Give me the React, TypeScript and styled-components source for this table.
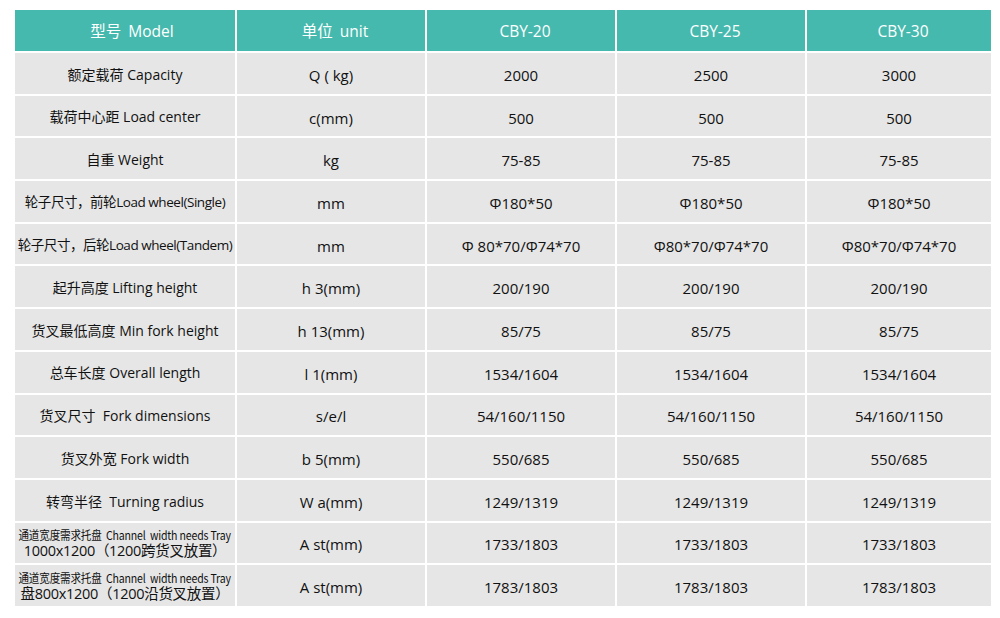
import React from "react";
import styled, { createGlobalStyle } from "styled-components";

const GlobalStyle = createGlobalStyle`
  body {
    margin: 0;
    background: #fff;
    font-family: "Open Sans", "Noto Sans CJK SC", sans-serif;
  }
`;

const Page = styled.div`
  padding: 10px 0 0 15px;
`;

const Grid = styled.div`
  display: grid;
  width: 976px;
  height: 596px;
  grid-template-columns: 220px 188px 188px 188px 184px;
  grid-template-rows: 41px repeat(13, 1fr);
  gap: 2px;
  background: #fff;
`;

const HeadCell = styled.div<{ $nudge?: number }>`
  display: flex;
  align-items: center;
  justify-content: center;
  background: #45b9ae;
  color: #fff;
  font-size: 15.5px;
  word-spacing: 3px;
  white-space: pre;
  padding-left: ${(p) => p.$nudge ?? 8}px;
`;

const Cell = styled.div`
  display: flex;
  flex-direction: column;
  align-items: center;
  justify-content: center;
  background: #e6e6e6;
  color: #111;
  font-size: 15px;
  white-space: pre;
  padding-top: 3px;
`;

const LabelCell = styled(Cell)<{ $tight?: boolean }>`
  font-size: ${(p) => (p.$tight ? "13.5px" : "14px")};
  line-height: 1.25;
  letter-spacing: ${(p) => (p.$tight ? "-0.45px" : "0")};
  padding-top: 2px;
`;

const SmallLine = styled.span`
  font-family: "Noto Sans CJK SC", sans-serif;
  font-size: 12px;
  transform: scaleX(0.88);
  letter-spacing: -0.2px;
`;

const BigLine = styled.span`
  font-size: 14.5px;
  letter-spacing: -0.3px;
`;

type Row = { label: React.ReactNode; unit: string; vals: string[]; tight?: boolean };

const rows: Row[] = [
  { label: "额定载荷 Capacity", unit: "Q ( kg)", vals: ["2000", "2500", "3000"] },
  { label: "载荷中心距 Load center", unit: "c(mm)", vals: ["500", "500", "500"] },
  { label: "自重 Weight", unit: "kg", vals: ["75-85", "75-85", "75-85"] },
  { label: "轮子尺寸，前轮Load wheel(Single)", unit: "mm", vals: ["Φ180*50", "Φ180*50", "Φ180*50"], tight: true },
  { label: "轮子尺寸，后轮Load wheel(Tandem)", unit: "mm", vals: ["Φ 80*70/Φ74*70", "Φ80*70/Φ74*70", "Φ80*70/Φ74*70"], tight: true },
  { label: "起升高度 Lifting height", unit: "h 3(mm)", vals: ["200/190", "200/190", "200/190"] },
  { label: "货叉最低高度 Min fork height", unit: "h 13(mm)", vals: ["85/75", "85/75", "85/75"] },
  { label: "总车长度 Overall length", unit: "l 1(mm)", vals: ["1534/1604", "1534/1604", "1534/1604"] },
  { label: "货叉尺寸  Fork dimensions", unit: "s/e/l", vals: ["54/160/1150", "54/160/1150", "54/160/1150"] },
  { label: "货叉外宽 Fork width", unit: "b 5(mm)", vals: ["550/685", "550/685", "550/685"] },
  { label: "转弯半径  Turning radius", unit: "W a(mm)", vals: ["1249/1319", "1249/1319", "1249/1319"] },
  {
    label: (
      <>
        <SmallLine>通道宽度需求托盘  Channel  width needs Tray</SmallLine>
        <BigLine>1000x1200（1200跨货叉放置）</BigLine>
      </>
    ),
    unit: "A st(mm)",
    vals: ["1733/1803", "1733/1803", "1733/1803"],
  },
  {
    label: (
      <>
        <SmallLine>通道宽度需求托盘  Channel  width needs Tray</SmallLine>
        <BigLine>盘800x1200（1200沿货叉放置）</BigLine>
      </>
    ),
    unit: "A st(mm)",
    vals: ["1783/1803", "1783/1803", "1783/1803"],
  },
];

const App = () => {
  return (
    <Page>
      <GlobalStyle />
      <Grid>
        <HeadCell $nudge={14}>{"型号 Model"}</HeadCell>
        <HeadCell>{"单位 unit"}</HeadCell>
        <HeadCell>CBY-20</HeadCell>
        <HeadCell>CBY-25</HeadCell>
        <HeadCell>CBY-30</HeadCell>
        {rows.map((r, i) => (
          <React.Fragment key={i}>
            <LabelCell $tight={r.tight}>{r.label}</LabelCell>
            <Cell>{r.unit}</Cell>
            {r.vals.map((v, j) => (
              <Cell key={j}>{v}</Cell>
            ))}
          </React.Fragment>
        ))}
      </Grid>
    </Page>
  );
};

export default App;
